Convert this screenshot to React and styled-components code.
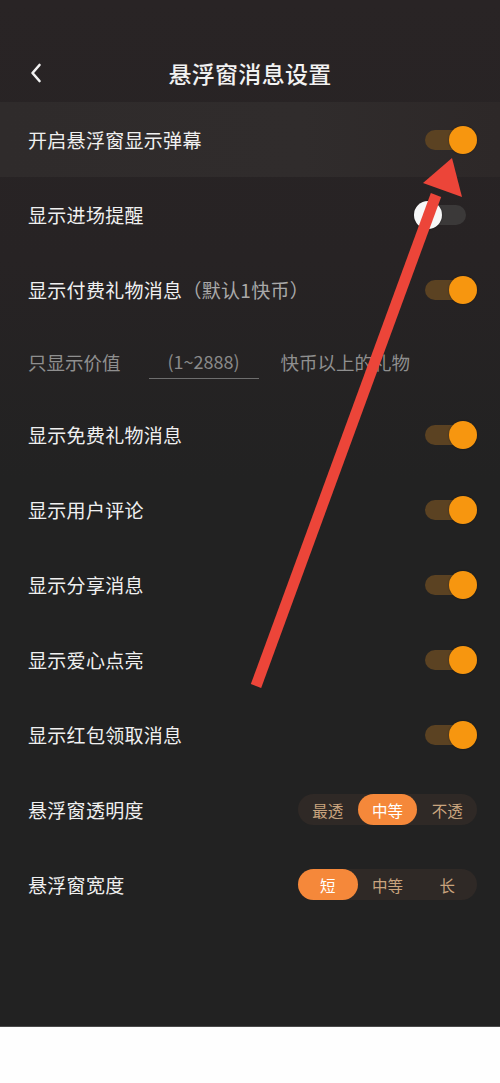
import React, { useState } from 'react'
import styled, { createGlobalStyle } from 'styled-components'

const GlobalStyle = createGlobalStyle`
  html, body {
    margin: 0;
    padding: 0;
    background: #fefefe;
  }
  * {
    box-sizing: border-box;
  }
`

const Page = styled.div`
  position: relative;
  width: 500px;
  height: 1083px;
  background: #fefefe;
  font-family: "Noto Sans CJK SC", "Noto Sans", sans-serif;
  overflow: hidden;
`

const Screen = styled.div`
  height: 1027px;
  background: linear-gradient(180deg, #292425 0px, #272324 260px, #222222 480px, #222222 100%);
  border-bottom: 1px solid #4a4a4a;
`

const Header = styled.div`
  display: flex;
  align-items: center;
  justify-content: center;
  position: relative;
  height: 102px;
  padding-top: 48px;
  padding-bottom: 4px;
`

const BackButton = styled.div`
  position: absolute;
  left: 26px;
  top: 60px;
  width: 20px;
  height: 26px;
  display: flex;
  align-items: center;
  justify-content: center;
`

const Title = styled.h1`
  margin: 0;
  font-size: 23px;
  font-weight: 500;
  color: #f2f2f2;
  letter-spacing: 0.3px;
`

const Row = styled.div`
  display: flex;
  align-items: center;
  justify-content: space-between;
  height: 75px;
  padding: 0 23px 0 28px;
  background: ${p => (p.$active ? 'linear-gradient(90deg, #2f2b2b 0%, #302c2c 60%, #2d2828 100%)' : 'transparent')};
`

const Label = styled.span`
  font-size: 19px;
  color: #f0f0f0;
  letter-spacing: 0.3px;
`

const Hint = styled.span`
  color: #a9a9a9;
`

const Track = styled.div`
  position: relative;
  width: 52px;
  height: 20px;
  border-radius: 10px;
  margin-right: ${p => (p.$on ? '0' : '11px')};
  background: ${p => (p.$on ? '#5b4222' : '#3b3939')};
  cursor: pointer;
`

const Thumb = styled.div`
  position: absolute;
  top: -4px;
  left: ${p => (p.$on ? '24px' : '0px')};
  width: 28px;
  height: 28px;
  border-radius: 50%;
  background: ${p => (p.$on ? '#f7960f' : '#f7f7f7')};
  box-shadow: 0 0 2px rgba(0, 0, 0, 0.4);
`

const ValueRow = styled.div`
  display: flex;
  align-items: center;
  height: 70px;
  padding: 0 28px;
  color: #8f8f8f;
  font-size: 18.5px;
`

const ValueInput = styled.div`
  width: 110px;
  margin: 0 22px 0 28px;
  padding: 2px 0 4px;
  border-bottom: 1.5px solid #6e6e6e;
  text-align: center;
  color: #8a8a8a;
  font-size: 18px;
`

const Segments = styled.div`
  display: flex;
  align-items: center;
  width: 179px;
  height: 31px;
  border-radius: 16px;
  background: #2f2926;
`

const Segment = styled.div`
  flex: 1;
  height: 31px;
  display: flex;
  align-items: center;
  justify-content: center;
  border-radius: 16px;
  font-size: 15.5px;
  color: ${p => (p.$selected ? '#ffffff' : '#c9a47e')};
  background: ${p => (p.$selected ? '#f5883a' : 'transparent')};
  cursor: pointer;
`

const ArrowLayer = styled.svg`
  position: absolute;
  left: 0;
  top: 0;
  pointer-events: none;
`

const Toggle = ({ on, onClick }) => (
  <Track $on={on} onClick={onClick}>
    <Thumb $on={on} />
  </Track>
)

const SegmentGroup = ({ options, value, onChange }) => (
  <Segments>
    {options.map(o => (
      <Segment key={o} $selected={o === value} onClick={() => onChange(o)}>
        {o}
      </Segment>
    ))}
  </Segments>
)

const App = () => {
  const [toggles, setToggles] = useState({
    danmu: true,
    enter: false,
    paid: true,
    free: true,
    comment: true,
    share: true,
    like: true,
    redpack: true
  })
  const [opacity, setOpacity] = useState('中等')
  const [width, setWidth] = useState('短')

  const flip = key => setToggles(t => ({ ...t, [key]: !t[key] }))

  const row = (key, label, hint, active) => (
    <Row $active={active}>
      <Label>
        {label}
        {hint && <Hint>{hint}</Hint>}
      </Label>
      <Toggle on={toggles[key]} onClick={() => flip(key)} />
    </Row>
  )

  return (
    <Page>
      <GlobalStyle />
      <Screen>
        <Header>
          <BackButton>
            <svg width="14" height="22" viewBox="0 0 14 22">
              <path d="M10.5 3 L3.5 11 L10.5 19" fill="none" stroke="#f2f2f2" strokeWidth="2.6" strokeLinecap="round" strokeLinejoin="round" />
            </svg>
          </BackButton>
          <Title>悬浮窗消息设置</Title>
        </Header>

        {row('danmu', '开启悬浮窗显示弹幕', null, true)}
        {row('enter', '显示进场提醒')}
        {row('paid', '显示付费礼物消息', '（默认1快币）')}
        <ValueRow>
          <span>只显示价值</span>
          <ValueInput>(1~2888)</ValueInput>
          <span>快币以上的礼物</span>
        </ValueRow>
        {row('free', '显示免费礼物消息')}
        {row('comment', '显示用户评论')}
        {row('share', '显示分享消息')}
        {row('like', '显示爱心点亮')}
        {row('redpack', '显示红包领取消息')}
        <Row>
          <Label>悬浮窗透明度</Label>
          <SegmentGroup options={['最透', '中等', '不透']} value={opacity} onChange={setOpacity} />
        </Row>
        <Row>
          <Label>悬浮窗宽度</Label>
          <SegmentGroup options={['短', '中等', '长']} value={width} onChange={setWidth} />
        </Row>
      </Screen>

      <ArrowLayer width="500" height="1083" viewBox="0 0 500 1083">
        <line x1="256" y1="686" x2="436" y2="195" stroke="#ec4539" strokeWidth="11" strokeLinecap="butt" />
        <polygon points="452,158 423,183 462,197" fill="#ec4539" />
      </ArrowLayer>
    </Page>
  )
}

export default App
